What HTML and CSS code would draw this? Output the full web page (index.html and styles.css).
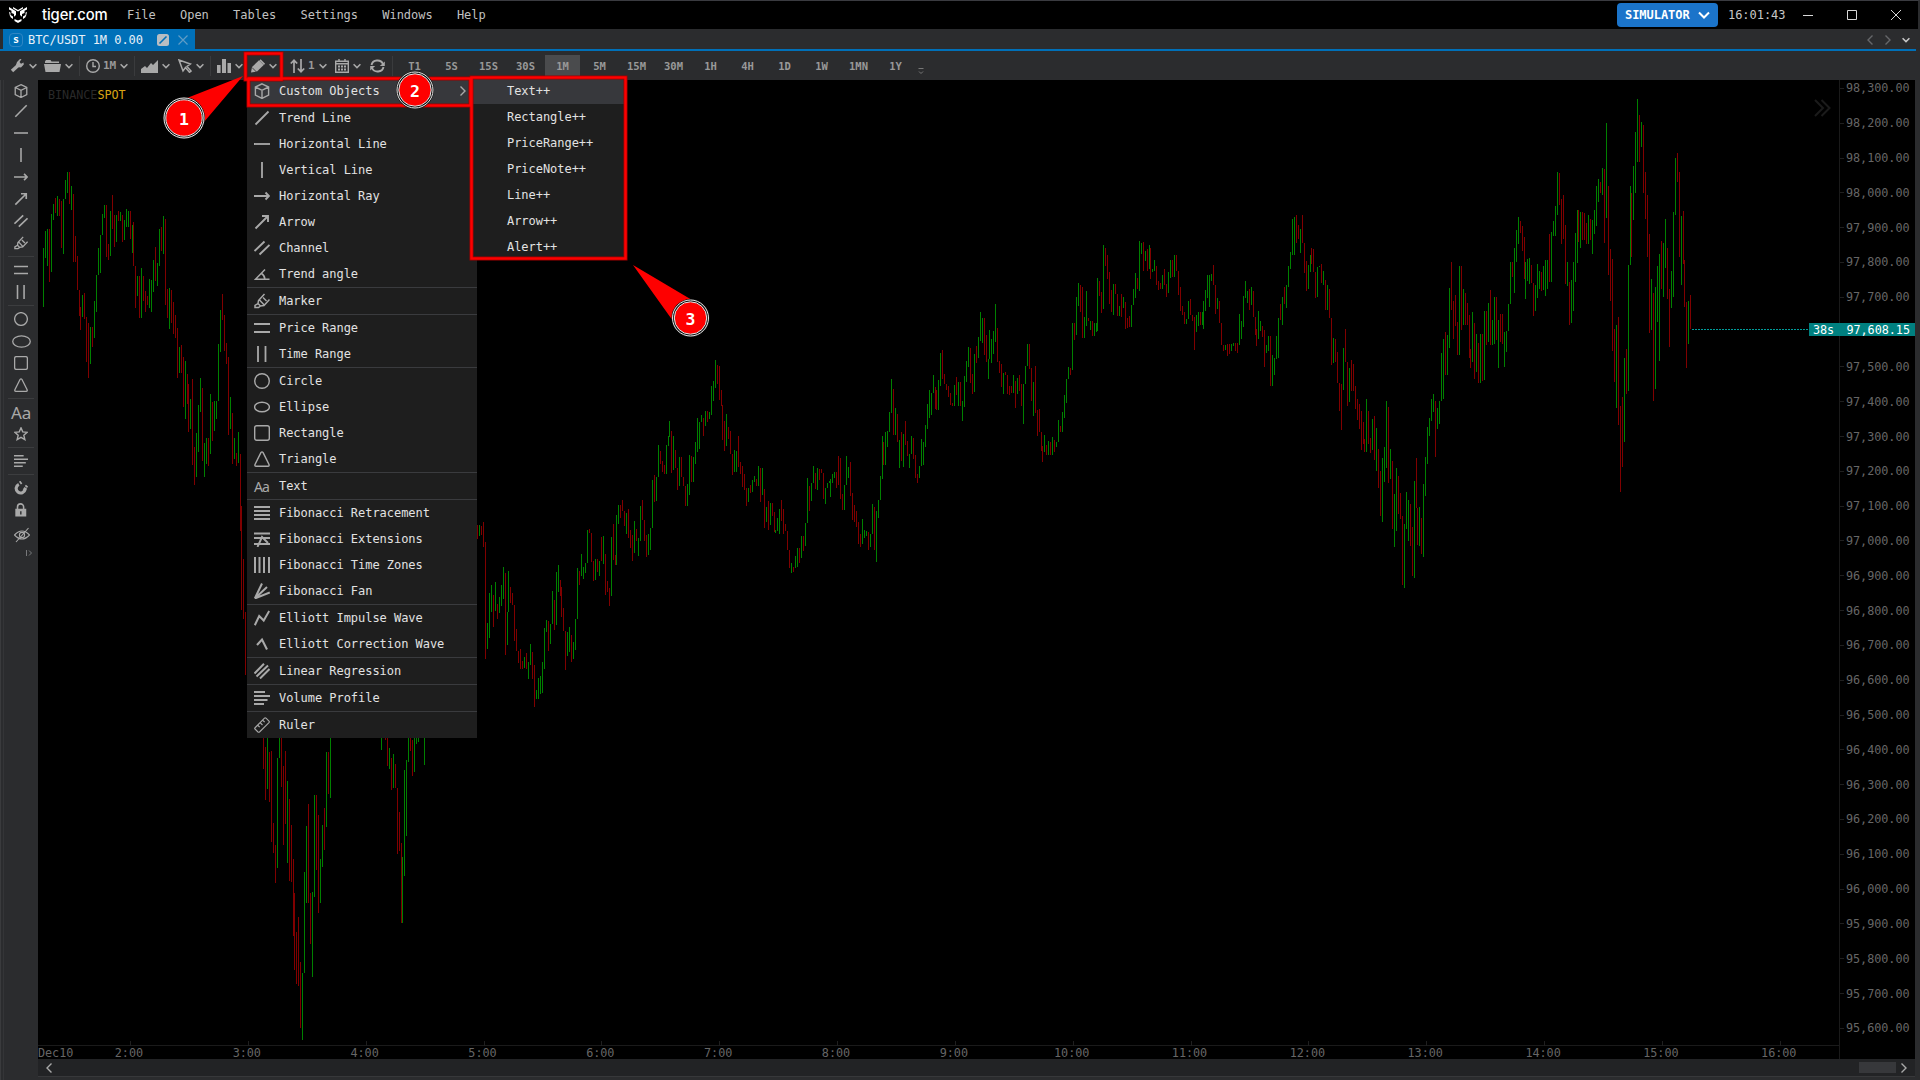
FILE: index.html
```html
<!DOCTYPE html>
<html lang="en">
<head>
<meta charset="utf-8">
<title>tiger.com</title>
<link rel="stylesheet" href="styles.css">
</head>
<body>
<svg class="defs" aria-hidden="true">
  <symbol id="cube" viewBox="0 0 16 16"><path d="M8 .8 14.6 4v8L8 15.4 1.4 12V4zM1.4 4 8 7.3 14.6 4M8 7.3v8"/></symbol>
  <symbol id="line" viewBox="0 0 16 16"><path d="M1.5 14.5 14.5 1.5" stroke-width="1.8"/></symbol>
  <symbol id="hline" viewBox="0 0 16 16"><path d="M0 8h16" stroke-width="1.8"/></symbol>
  <symbol id="vline" viewBox="0 0 16 16"><path d="M8 0v16" stroke-width="1.8"/></symbol>
  <symbol id="ray" viewBox="0 0 16 16"><path d="M0 8h15M11.5 4.5 15 8l-3.500 3.500" stroke-width="1.900"/></symbol>
  <symbol id="arrow" viewBox="0 0 16 16"><path d="M1.500 14.500 14 2M8 2h6v6" stroke-width="1.900"/></symbol>
  <symbol id="channel" viewBox="0 0 16 16"><path d="M.5 11 10.500 1.500M5.500 14.500 15.500 5" stroke-width="1.900"/></symbol>
  <symbol id="angle" viewBox="0 0 16 16"><path d="M11 3.500 1.500 13.300H15.500M7.500 7.500Q10.800 9.500 10.800 13" stroke-width="1.500"/></symbol>
  <symbol id="marker" viewBox="0 0 16 16"><path d="M10.500 1 4.500 7.500l-.5 3 2.500 2.500 3.500-.5 5.500-6M5.500 7 10 11.800M4 10.500 1 12.500v2h3.500l2-1.500" stroke-width="1.500"/><path d="M9 4.500 12.500 8"/></symbol>
  <symbol id="prange" viewBox="0 0 16 16"><path d="M0 4h16M0 12h16" stroke-width="1.800"/></symbol>
  <symbol id="trange" viewBox="0 0 16 16"><path d="M4 0v16M11.500 0v16" stroke-width="1.800"/></symbol>
  <symbol id="circle" viewBox="0 0 16 16"><circle cx="8" cy="8" r="7.300"/></symbol>
  <symbol id="ellipse" viewBox="0 0 16 16"><ellipse cx="8" cy="8" rx="7.400" ry="4.800"/></symbol>
  <symbol id="rect" viewBox="0 0 16 16"><rect x=".7" y=".7" width="14.600" height="14.600" rx="2"/></symbol>
  <symbol id="tri" viewBox="0 0 16 16"><path d="M7 1.500Q8 .3 9 1.500L15 13.500Q15.500 15.200 14 15.200H2Q.5 15.200 1 13.500z"/></symbol>
  <symbol id="fibr" viewBox="0 0 16 16"><path d="M0 2h16M0 6h16M0 10h16M0 14h16" stroke-width="2"/></symbol>
  <symbol id="fibe" viewBox="0 0 16 16"><path d="M0 2.500h16M0 7h16M0 13h16M3.500 16 8 6l6 6" stroke-width="1.900"/></symbol>
  <symbol id="fibt" viewBox="0 0 16 16"><path d="M1 0v16M5.500 0v16M10 0v16M15 0v16" stroke-width="2"/></symbol>
  <symbol id="fan" viewBox="0 0 16 16"><path d="M.8 15.500 8 .5M.8 15.500 13 4M.8 15.500 15.800 9.500" stroke-width="2"/></symbol>
  <symbol id="imp" viewBox="0 0 16 16"><path d="M.8 15.200 5.200 6l4.500 4.500L15.200 1" stroke-width="2"/></symbol>
  <symbol id="corr" viewBox="0 0 16 16"><path d="M3 9 8 3.500l5 10" stroke-width="2.100"/></symbol>
  <symbol id="lreg" viewBox="0 0 16 16"><path d="M.5 10.500 10 .8M2.500 13.500 14 2.500M6 15.500 15.500 6" stroke-width="2"/></symbol>
  <symbol id="vol" viewBox="0 0 16 16"><path d="M0 2h11M0 6h16M0 10h13.500M0 14h10" stroke-width="1.900"/></symbol>
  <symbol id="ruler" viewBox="0 0 16 16"><path d="M.8 11 10.500 1.200Q11.200.5 12 1.200L15 4.200Q15.600 5 15 5.600L5.500 15Q4.700 15.600 4 15L1 12Q.4 11.500.8 11zM4 8.500l1.700 1.700M6.500 6l2 2M9 3.500 10.700 5.200" stroke-width="1.100"/></symbol>
  <symbol id="star" viewBox="0 0 16 16"><path d="m8 1 2 4.600 5 .5-3.800 3.300 1.200 5L8 11.800l-4.400 2.600 1.200-5L1 6.100l5-.5z" stroke-width="1.600"/></symbol>
  <symbol id="magnet" viewBox="0 0 16 16"><path d="M5.500 3.800A5.200 5.200 0 1 0 12.800 9.500L11 8.300" stroke-width="3.600"/><path d="m6.500.3 2.200 3.200M13 5l2.500 2.200" stroke-width="2"/></symbol>
  <symbol id="lock" viewBox="0 0 16 16"><path d="M4 7V4.500a3.500 3.500 0 0 1 7 0V7" stroke-width="1.800"/><path class="solid" fill-rule="evenodd" d="M1.500 6.500h12.500v9h-12.500zM7 9.500v3.500h1.600v-3.500z"/></symbol>
  <symbol id="eye" viewBox="0 0 16 16"><path d="M.5 8Q8 0 15.500 8 8 16 .5 8zM2 15 14.500 1" stroke-width="1.100"/><circle cx="8" cy="8" r="2.600" stroke-width="1.100"/></symbol>
  <symbol id="chev" viewBox="0 0 8 8"><path d="m.6 2.200 3.400 3.400 3.400-3.400" stroke-width="1.500"/></symbol>
  <symbol id="right" viewBox="0 0 8 12"><path d="m1.500 1.500 4.500 4.500-4.500 4.500" stroke-width="1.400"/></symbol>
  <symbol id="left" viewBox="0 0 8 12"><path d="M6.500 1.500 2 6l4.500 4.500" stroke-width="1.400"/></symbol>
</svg>

<header class="titlebar">
  <svg class="logo" viewBox="0 0 18 16"><path d="M0 0 7 4.200V8L5 9.800V7L2.500 6V3.800L0 2.500zM18 0 11 4.200V8l2 1.800V7l2.500-1V3.800L18 2.500zM0 4.800l1.500.9V8L4 9.500V12L1.800 10.500.8 8.500zM18 4.800l-1.500.9V8L14 9.500V12l2.200-1.500 1-2zM4 0l5 3 5-3v1.500L9 4.400 4 1.500zM5.500 12l3.500 1.500 3.500-1.500v2L9 16l-3.500-2z"/></svg>
  <span class="brand">tiger.com</span>
  <nav class="mainmenu"><span>File</span><span>Open</span><span>Tables</span><span>Settings</span><span>Windows</span><span>Help</span></nav>
  <div class="mode">SIMULATOR <svg class="mode-chev" viewBox="0 0 12 8"><path d="m1 1.500 5 5 5-5"/></svg></div>
  <span class="clock">16:01:43</span>
  <svg class="winbtn" viewBox="0 0 10 10"><path d="M0 5.500h10"/></svg>
  <svg class="winbtn" viewBox="0 0 10 10"><path d="M.5.5h9v9h-9z"/></svg>
  <svg class="winbtn" viewBox="0 0 10 10"><path d="m0 0 10 10M10 0 0 10"/></svg>
</header>

<div class="tabs">
  <div class="tab"><span class="badge">s</span><span class="tabname">BTC/USDT 1M 0.00</span>
    <svg class="link" viewBox="0 0 12 12"><rect width="12" height="12" rx="2.500"/><path d="m2.500 9.500 7-7"/></svg>
    <svg class="close" viewBox="0 0 10 10"><path d="m.5.5 9 9M9.500.5l-9 9"/></svg></div>
  <div class="tabnav"><svg class="i arrow-s"><use href="#left"/></svg><svg class="i arrow-s"><use href="#right"/></svg><svg class="i chev lit"><use href="#chev"/></svg></div>
</div>

<div class="toolbar">
  <div class="tools">
    <svg class="t" viewBox="0 0 14 14"><path d="M2 12 8 6.500" stroke-width="3.500"/><path class="solid" d="M7 3 10 0l1.500.3L9.500 3 11 4.800l2.500-1.300.3 2L11 8.500l-4-.5-1-2z"/></svg>
    <svg class="i chev"><use href="#chev"/></svg>
    <svg class="t w17" viewBox="0 0 17 14"><path class="solid" d="M1 2.500 2 1h4.500l1 1.500H15V4H1zM0 5h17l-1.500 8h-14z"/></svg>
    <svg class="i chev"><use href="#chev"/></svg>
    <i class="vsep"></i>
    <svg class="t" viewBox="0 0 14 14"><circle cx="7" cy="7" r="6.300"/><path d="M7 3v4.500h3"/></svg>
    <span class="period">1M</span>
    <svg class="i chev"><use href="#chev"/></svg>
    <i class="vsep"></i>
    <svg class="t w17" viewBox="0 0 17 14"><path class="solid" d="M0 14v-4l4-3 2 2 4-5 2 2 5-5v13z"/></svg>
    <svg class="i chev"><use href="#chev"/></svg>
    <svg class="t" viewBox="0 0 14 14"><path d="M1 1 12.500 5 9 7.500l4 4.500-1.500 1.300-4-4.800L5 12z" stroke-width="1.500"/></svg>
    <svg class="i chev"><use href="#chev"/></svg>
    <i class="vsep"></i>
    <svg class="t" viewBox="0 0 14 14"><path class="solid" d="M0 6h3.600v8H0zM5 0h4v14H5zM10.500 4h3.500v10h-3.500z"/></svg>
    <svg class="i chev"><use href="#chev"/></svg>
    <svg class="t w15" viewBox="0 0 15 14"><path class="solid" d="M0 13.500 1 8 8 1.300 12.700 6 6 12.500z"/><path d="m9 .8 4.500 4.500" stroke-width="1.800"/><path class="cut" d="m1 8.500 4.500 4.500"/></svg>
    <svg class="i chev"><use href="#chev"/></svg>
    <svg class="t w15" viewBox="0 0 15 14"><path d="M4 14V1.500M.8 4.500 4 1.300l3.200 3.200M11 0v12.500M7.800 9.500l3.200 3.200 3.200-3.200" stroke-width="1.700"/></svg>
    <span class="period">1</span>
    <svg class="i chev"><use href="#chev"/></svg>
    <svg class="t" viewBox="0 0 14 14"><path d="M.7 2.200h12.600v11H.7zM4 0v3M10 0v3M.7 4.800h12.600"/><path d="M3 7.500h8.500M3 10.500h8.500" stroke-width="2" stroke-dasharray="2 1"/></svg>
    <svg class="i chev"><use href="#chev"/></svg>
    <svg class="t w15" viewBox="0 0 15 14"><path d="M1.500 6A6 5.500 0 0 1 13 5M13.500 8A6 5.500 0 0 1 2 9" stroke-width="1.900"/><path class="solid" d="M14.800 2.500V7h-5zM.2 11.500V7h5z"/></svg>
    <i class="vsep"></i>
  </div>
  <div class="frames"><span>T1</span><span>5S</span><span>15S</span><span>30S</span><span class="on">1M</span><span>5M</span><span>15M</span><span>30M</span><span>1H</span><span>4H</span><span>1D</span><span>1W</span><span>1MN</span><span>1Y</span></div>
  <svg class="more" viewBox="0 0 6 7"><path d="M.5.500h5M1 3.500l2 2 2-2"/></svg>
</div>

<main class="work">
  <aside class="sidebar">
    <svg class="i first"><use href="#cube"/></svg>
    <svg class="i"><use href="#line"/></svg><svg class="i"><use href="#hline"/></svg><svg class="i"><use href="#vline"/></svg><svg class="i"><use href="#ray"/></svg><svg class="i"><use href="#arrow"/></svg><svg class="i"><use href="#channel"/></svg><svg class="i"><use href="#marker"/></svg>
    <hr>
    <svg class="i"><use href="#prange"/></svg><svg class="i"><use href="#trange"/></svg>
    <hr>
    <svg class="i"><use href="#circle"/></svg><svg class="i wide"><use href="#ellipse"/></svg><svg class="i"><use href="#rect"/></svg><svg class="i"><use href="#tri"/></svg>
    <hr>
    <span class="aa">Aa</span><svg class="i"><use href="#star"/></svg>
    <hr>
    <svg class="i"><use href="#vol"/></svg>
    <hr>
    <svg class="i"><use href="#magnet"/></svg><svg class="i"><use href="#lock"/></svg><svg class="i eye"><use href="#eye"/></svg>
    <svg class="expand" viewBox="0 0 7 6"><path d="M.5 0v6M3 .5 5.500 3 3 5.500"/></svg>
  </aside>

  <section class="chart">
    <svg class="plot" id="plot" viewBox="38 80 1801 965">
      <path class="lastline" d="M1692 329.500H1809"/>
      <path class="jump" d="m1815 100 8 8-8 8M1821.500 100l8 8-8 8"/>
    </svg>
    <div class="source">BINANCE<b>SPOT</b></div>
    <div class="prices" id="prices"></div>
    <div class="times" id="times"><span class="day">Dec10</span></div>
    <div class="last"><span>38s</span><span>97,608.15</span></div>
    <div class="scroll"><svg class="i arrow-s"><use href="#left"/></svg><i class="thumb"></i><svg class="i arrow-s"><use href="#right"/></svg></div>
  </section>
</main>

<div class="menu">
  <div class="item hot"><svg class="i"><use href="#cube"/></svg>Custom Objects<svg class="i sub"><use href="#right"/></svg></div><hr>
  <div class="item"><svg class="i"><use href="#line"/></svg>Trend Line</div>
  <div class="item"><svg class="i"><use href="#hline"/></svg>Horizontal Line</div>
  <div class="item"><svg class="i"><use href="#vline"/></svg>Vertical Line</div>
  <div class="item"><svg class="i"><use href="#ray"/></svg>Horizontal Ray</div>
  <div class="item"><svg class="i"><use href="#arrow"/></svg>Arrow</div>
  <div class="item"><svg class="i"><use href="#channel"/></svg>Channel</div>
  <div class="item"><svg class="i"><use href="#angle"/></svg>Trend angle</div><hr>
  <div class="item"><svg class="i"><use href="#marker"/></svg>Marker</div><hr>
  <div class="item"><svg class="i"><use href="#prange"/></svg>Price Range</div>
  <div class="item"><svg class="i"><use href="#trange"/></svg>Time Range</div><hr>
  <div class="item"><svg class="i"><use href="#circle"/></svg>Circle</div>
  <div class="item"><svg class="i"><use href="#ellipse"/></svg>Ellipse</div>
  <div class="item"><svg class="i"><use href="#rect"/></svg>Rectangle</div>
  <div class="item"><svg class="i"><use href="#tri"/></svg>Triangle</div><hr>
  <div class="item"><span class="aa small">Aa</span>Text</div><hr>
  <div class="item"><svg class="i"><use href="#fibr"/></svg>Fibonacci Retracement</div>
  <div class="item"><svg class="i"><use href="#fibe"/></svg>Fibonacci Extensions</div>
  <div class="item"><svg class="i"><use href="#fibt"/></svg>Fibonacci Time Zones</div>
  <div class="item"><svg class="i"><use href="#fan"/></svg>Fibonacci Fan</div><hr>
  <div class="item"><svg class="i"><use href="#imp"/></svg>Elliott Impulse Wave</div>
  <div class="item"><svg class="i"><use href="#corr"/></svg>Elliott Correction Wave</div><hr>
  <div class="item"><svg class="i"><use href="#lreg"/></svg>Linear Regression</div><hr>
  <div class="item"><svg class="i"><use href="#vol"/></svg>Volume Profile</div><hr>
  <div class="item"><svg class="i"><use href="#ruler"/></svg>Ruler</div>
</div>
<div class="submenu">
  <div class="item hot">Text++</div><div class="item">Rectangle++</div><div class="item">PriceRange++</div><div class="item">PriceNote++</div><div class="item">Line++</div><div class="item">Arrow++</div><div class="item">Alert++</div>
</div>

<svg class="notes" viewBox="0 0 1920 1080">
  <g class="frame-edge"><rect x="245.500" y="53.500" width="36" height="26"/><rect x="248.500" y="78.500" width="222" height="27"/><rect x="471.500" y="77.500" width="154" height="181"/></g>
  <g class="frame-core"><rect x="245.500" y="53.500" width="36" height="26"/><rect x="248.500" y="78.500" width="222" height="27"/><rect x="471.500" y="77.500" width="154" height="181"/></g>
  <path class="tail" d="M243 76 187 98 204 122zM633 265l59 35-19 21z"/>
  <g class="ball"><circle cx="184" cy="118" r="19.500"/><circle cx="415" cy="90" r="17.500"/><circle cx="690.500" cy="318" r="17.500"/></g>
  <g class="ring"><circle cx="184" cy="118" r="18.200"/><circle cx="184" cy="118" r="20"/><circle cx="415" cy="90" r="16.200"/><circle cx="415" cy="90" r="18"/><circle cx="690.500" cy="318" r="16.200"/><circle cx="690.500" cy="318" r="18"/></g>
  <text x="184" y="124.500">1</text><text x="415" y="96.500">2</text><text x="690.500" y="324.500">3</text>
</svg>
<script src="chart.js"></script>
</body>
</html>
```
FILE: styles.css
```css
* { box-sizing: border-box; }
body { margin: 0; width: 1920px; height: 1080px; overflow: hidden; display: flex; flex-direction: column; background: #2b2c2e; color: #b9b9b9; font: 12px "DejaVu Sans Mono", "Liberation Mono", monospace; letter-spacing: -0.04px; }
.defs { position: absolute; width: 0; height: 0; }
svg { flex: none; fill: none; stroke: #a9a9a9; stroke-width: 1.4; }
.solid { fill: #a9a9a9; stroke: none; }
.i { width: 16px; height: 16px; }
.i.chev { width: 8px; height: 8px; }
.i.arrow-s { width: 8px; height: 12px; }

.titlebar { height: 29px; background: #000; border-top: 1px solid #3a3b40; border-right: 2px solid #2b2c2e; display: flex; align-items: center; padding-left: 9px; padding-right: 17px; flex: none; }
.logo { width: 18px; height: 16px; fill: #fff; stroke: none; }
.brand { margin-left: 15px; width: 85px; color: #fff; font: 500 14.8px "Inter", sans-serif; letter-spacing: -0.1px; padding-bottom: 1px; }
.mainmenu { display: flex; gap: 24.3px; color: #c0c0c0; }
.mode { margin-left: auto; width: 101px; height: 24px; background: #1b74ca; border-radius: 4px; color: #fff; font-weight: bold; display: flex; align-items: center; justify-content: space-between; padding: 0 8px; }
.mode-chev { width: 12px; height: 8px; stroke: #fff; stroke-width: 2; }
.clock { margin-left: 10px; width: 75px; color: #c8c8c8; }
.winbtn { width: 10px; height: 10px; stroke: #d8d8d8; stroke-width: 1; margin-right: 34px; }
.winbtn:last-child { margin-right: 0; }

.tabs { height: 22px; flex: none; border-bottom: 2px solid #0070b8; display: flex; justify-content: space-between; padding-left: 3px; margin-right: 4px; }
.tab { width: 192px; background: #0070b8; color: #fff; display: flex; align-items: center; padding-left: 6px; padding-top: 1px; }
.badge { width: 14px; height: 14px; border: 1px solid #2f86c4; border-radius: 4px; font: bold 10px/11px "DejaVu Sans Mono", monospace; text-align: center; }
.tabname { margin-left: 5px; width: 129px; color: #e8f1f8; white-space: nowrap; }
.link { width: 12px; height: 12px; fill: #b8bdc2; stroke: none; }
.link path { stroke: #0070b8; stroke-width: 1.6; }
.close { width: 10px; height: 10px; margin-left: 9px; stroke: #5f9cc6; stroke-width: 1.2; }
.tabnav { display: flex; align-items: center; gap: 10px; padding-right: 6px; padding-top: 2px; }
.tabnav svg { stroke: #66676a; }
.tabnav .lit { stroke: #c8c8c8; }

.toolbar { height: 29px; flex: none; display: flex; align-items: center; }
.tools { display: grid; width: 397px; height: 28px; padding-left: 10px; align-items: center; grid-template-columns: 19px 15px 21px 14px 7px 17px 17px 14px 7px 21px 16px 18px 14px 7px 18px 16px 18px 21px 18px 11px 16px 18px 17px 22px 4px; }
.t { width: 14px; height: 14px; }
.t.w17 { width: 17px; }
.t.w15 { width: 15px; }
.cut { stroke: #2b2c2e; stroke-width: .8; }
.vsep { width: 1px; height: 20px; background: #3a3b3d; }
.period { font-weight: bold; font-size: 11px; color: #999; }
.frames { display: flex; gap: 2px; height: 100%; padding-top: 4px; }
.frames span { width: 35px; text-align: center; font: bold 10.5px/22px "DejaVu Sans Mono", monospace; color: #999; }
.frames .on { background: #4a4b4d; }
.more { width: 6px; height: 7px; margin: 12px 0 0 5px; stroke: #777; stroke-width: 1; }

.work { flex: none; height: 1000px; display: flex; }
.sidebar { width: 38px; display: flex; flex-direction: column; align-items: center; padding-left: 4px; box-shadow: inset 1px 0 #3a3b3d, inset 3px 0 #2b2c2e, inset 4px 0 #343537; }
.sidebar .i { width: 14px; height: 14px; margin: 4px 0; stroke-width: 1.5; }
.sidebar .first { height: 14px; margin: 4px 0 2px; }
.sidebar .wide { width: 19px; height: 19px; margin: 1.5px 0; stroke-width: 1.1; }
.sidebar .eye { width: 16px; height: 16px; margin: 6px -2px 3px 0; }
.sidebar hr { width: 26px; height: 1px; border: 0; margin: 2px 0; background: #3c3d3f; }
.aa { height: 22px; font: 17px/24px "Noto Sans", sans-serif; letter-spacing: -.3px; color: #a9a9a9; }
.aa.small { width: 16px; font-size: 14px; letter-spacing: -1px; }
.expand { width: 7px; height: 6px; margin: 4px 0 0 16px; stroke: #77787a; stroke-width: 1; }

.chart { position: relative; width: 1877px; height: 997px; display: grid; grid-template: 965px 14px 17px 1px / 1801px 76px; background: #000; font-size: 11.8px; }
.plot { width: 1801px; height: 965px; stroke: none; }
.up { fill: #008000; }
.down { fill: #800000; }
.lastline { stroke: #009c9a; stroke-width: 1; stroke-dasharray: 2 1; }
.jump { stroke: #1b1b1b; stroke-width: 2; }
.source { position: absolute; left: 10px; top: 8px; color: #292929; letter-spacing: -0.05px; }
.source b { color: #d9a514; font-weight: normal; }
.prices { grid-row: 1 / 3; grid-column: 2; border-left: 1px solid #1a1a1a; overflow: hidden; color: #666; }
.prices::before { content: ""; display: block; margin-top: -9px; }
.price { height: 34.815px; display: flex; align-items: center; gap: 2px; }
.price::before { content: ""; width: 4px; height: 1px; background: #1f1f1f; }
.times { grid-row: 2; grid-column: 1; display: flex; border-top: 1px solid #1a1a1a; color: #666; line-height: 14px; }
.times .day { width: 32px; white-space: nowrap; }
.time { width: 117.85px; flex: none; text-align: center; position: relative; }
.time::before { content: ""; position: absolute; left: 60px; top: -5px; width: 1px; height: 5px; background: #1f1f1f; }
.last { position: absolute; right: 0; top: 243px; width: 106px; height: 13px; background: #008080; color: #fff; display: flex; justify-content: space-between; padding: 0 5px 0 4px; line-height: 14px; }
.scroll { grid-row: 3; grid-column: 1 / 3; background: #222325; display: flex; align-items: center; padding: 0 7px; gap: 4px; }
.thumb { margin-left: auto; width: 37px; height: 11px; background: #37383b; }
.chart::after { content: ""; grid-row: 4; grid-column: 1 / 3; background: #37383a; }

.menu, .submenu { position: absolute; background: #1e1e1e; color: #e2e2e2; }
.menu { left: 247px; top: 78px; width: 230px; height: 660px; }
.menu hr { height: 1px; margin: 0; border: 0; background: #3a3b3e; }
.item { height: 26px; display: flex; align-items: center; gap: 9px; padding-left: 7px; white-space: pre; }
.item .sub { width: 8px; height: 12px; margin-left: auto; margin-right: 10px; }
.hot { background: #37383c; }
.submenu { left: 473px; top: 78px; width: 152px; height: 182px; }
.submenu .item { padding-left: 34px; }

.notes { position: absolute; left: 0; top: 0; width: 1920px; height: 1080px; stroke: none; }
.frame-edge { stroke: #a00000; stroke-width: 4; }
.frame-core { stroke: #fe0000; stroke-width: 2.4; }
.tail { fill: #fe0000; }
.ball { fill: #fe0000; stroke: #111; stroke-width: 3; }
.ring { stroke: #e8e8e8; stroke-width: 1; }
.notes text { fill: #fff; font: bold 16.5px "DejaVu Sans Mono", monospace; text-anchor: middle; letter-spacing: 0; }
```
FILE: chart.js
```js
// Each run: [first bar x, y origin, y units per pixel, bars]; a bar is direction, high, low.
const FIRST = 43.68, STEP = 1.9633;
const runs = [
[43,80,3,"g504 681 g453 534 g447 558 r447 606 g402 576 g372 420 r354 399 g348 408 r357 408 r363 504 g357 522 g300 357 g276 339 r276 372 g318 390 r342 546 r468 546 r528 630 r630 708 r681 750 g645 711 r639 717 r711 846 r729 894 g741 852 r741 801 g663 774 g585 696 g504 585 g465 579 g402 465 g375 414 r375 531 r492 540 g393 528 r345 447 r405 501 g405 486 r393 423 g396 423 r405 486 g420 480 g387 441 g393 441 r393 477 g435 519"],
[133,80,3,"r426 558 r558 684 g588 648 r588 714 g564 714 r588 663 r633 696 r648 675 g597 684 g600 696 g540 636 r501 603 g549 618 g447 558 r441 513 g408 522 r417 675 r627 714 g624 747 r630 729 r666 762 r705 774 r744 894 g801 879 r795 879 r831 981 g843 1017 r882 972 r912 1056 g957 1047 r897 1155 r1101 1215 g1059 1191 g975 1116 g894 996 r924 1143 g1089 1191 g1074 1152 r1074 1158 g942 1122 r966 1083 g963 1053 g963 1017 g792 963 g690 816 r642 720 r705 813 r789 852 r831 1065 g951 1047 r999 1152 g1074 1137 r1120 1158 g1056 1149 r1122 1353 r1278 1590 r1437 1617 r1596 1785"],
[263,540,2.904,"r540 665 r600 755 g540 722 r617 760 r613 877 r822 909 r886 996 g632 952 g540 633 r540 717 r656 886 r613 825 g700 938 r752 990 r829 993 r926 1150 r1025 1248 r1137 1288 r1095 1295 r1225 1417 g1257 1451 g964 1257 g830 1054 r767 1054 r1025 1173 g1021 1269 g740 1036 r740 958 r799 1083 g926 1054 g828 950 r778 900 g616 833 r616 738 g540 748"],
[381,540,2.904,"g540 610"],
[385,540,2.904,"r540 580 r540 656 g603 665 r632 726 g621 719 r650 720 r720 912 r790 903 r880 1112 g920 1112 g668 976 g639 859 g540 645 r540 613 r580 685 g540 674 g540 592 g540 587"],
[424,540,2.904,"g540 653"],
[477,400,3,"r375 417 g375 408"],
[481,340,3,"r558 585 r546 621 r606 957 g849 927 g759 894 g735 816 r765 861 g726 813 r792 837 g771 819 g735 798 g681 777 r699 945 g816 915 g693 816 r741 789 r759 795 r795 903 r867 933"],
[518,340,3,"r933 969 r927 987 r963 987 g951 984 r939 987 g966 1017 g912 975 r936 1017 r975 1101 g1050 1077 g1014 1077 g1008 1062 g966 1059 g864 987 g840 876 r843 933 g852 912 g753 852 r780 870 g696 855 g675 756 r720 768 r741 831 r804 873 r873 990 g876 948 g861 936 r885 966"],
[573,340,3,"g906 957 g837 930 g684 837 r693 735 g642 708 g681 717 g669 699 g570 669 r567 579 r579 666 r663 723 g657 720 r657 696 g663 708 r591 663 g588 672 r642 765 r723 756 r744 798 g591 768 r552 660 r645 675 g525 675 g495 552 r495 534 r480 513 r513 558 g519 582"],
[628,340,3,"r507 594 r570 624 r585 663 g543 639 r567 603 g594 648 g498 603 r480 540 r540 603 r585 651 g582 645 g564 630 g420 564 r405 486 g411 483 g315 411 r333 372 r363 396 r375 402 g315 402 g288 318 g243 291 r273 399 g288 390 r330 384 r384 450 g351 438 r351 411"],
[683,340,3,"r411 438 r438 498 g432 498 g345 465 r348 426 g351 426 g306 372 g234 336 g246 327 g225 246 r234 288 g213 258 r213 246 g216 237 g138 225 g123 183 g60 144 r75 132 r78 180 r150 198 r195 300 r243 333 g222 318 r261 297 r273 342 r342 405 g330 396 g333 396"],
[738,340,3,"r288 381 r366 402 r378 441 r402 450 r444 498 g444 486 r435 459 g420 456 g408 426 r417 438 g378 438 r384 486 g384 465 r447 564 g501 546 r483 570 g489 555 r489 528 r516 576 g570 579 g534 573 g507 582 r480 543 r507 582 r552 573 r573 630 r630 684 g669 699"],
[793,340,3,"r681 696 g648 684 g624 681 r624 669 g588 654 r588 633 g549 618 g414 549 r438 513 g429 483 g378 429 r399 447 g384 450 r387 420 r387 399 r399 477 g444 492 g429 444 g423 429 g417 471 g402 429 g396 414 r396 444 r348 435 r354 477 r462 510 g435 510"],
[846,340,3,"g348 435 g381 414 r366 468 r459 540 r495 546 r513 561 r546 612 r582 621 g537 612 g570 594 g573 588 r576 630 g582 621 g492 582 r501 630 g513 666 g480 534 g408 480 g288 417 r306 375 g276 375 g273 321 g216 276 g117 219 r147 285 g204 285 r222 306 g300 384"],
[901,340,3,"r276 363 g282 381 r243 315 r303 348 g342 384 g288 342 r294 357 r345 414 r402 429 g378 414 g297 378 g306 375 g255 321 g192 267 g150 234 g159 225 g105 159 r141 207 r150 210 g120 210 g39 138 r30 117 r102 132 r132 150 r138 171 r159 195 r189 198 g135 198"],
[956,340,3,"r111 165 g126 198"],
[960,220,3,"r486 558 g543 603 g468 561 g423 486 g381 441 r384 489 r462 522 g402 516 r378 429 g351 414 g276 363 g294 369 r294 405 r345 426 g417 477 g330 417 g357 429 g333 402 g252 366 r324 426 r423 459 r432 501 g459 522 r456 465 r465 522 r498 525"],
[1011,220,3,"r498 519 g465 519 r483 564 g474 522 r465 513 r492 558 g492 612 g438 492 g372 438 r372 447 r444 543 g486 588 r438 579 r570 648 r567 636 r636 693 r678 726 g645 696 r675 705 g663 705 r666 705 g651 705 r660 696 g666 681 g600 666 r618 636 g576 636 g525 594"],
[1066,220,3,"g477 549 g441 477 r444 465 g309 450 r309 360 g231 345 g189 258 r195 276 r201 354 g291 354 g213 318 r294 303 g303 330 r303 348 g309 348 g309 336 g174 333 r183 228 r216 279 g75 267 r84 138 r105 177 r156 252 r210 276 g192 285 r192 222 r222 288 g258 288"],
[1121,220,3,"r222 291 g231 264 r246 327 r294 324 r288 321 g255 321 g207 255 g159 234 r174 207 g63 213 g69 102 r66 153 g93 123 r87 153 g75 147 r84 177 g147 156 g120 153 r138 195 r183 210 r189 207 g165 207 r147 195 r192 231 g156 219 g120 174 r120 171 g105 171"],
[1176,220,3,"r105 153 r153 225 r201 273 r258 285 r276 312 g297 312 g243 297 r237 285 r285 303 r291 390 g285 336 g276 318 r276 315 g276 315 g243 327 g210 273 g165 234 g165 261 g162 183 r135 195 r195 282 g234 267 r243 309 r309 375 r375 393 g375 390 r372 408 r372 402"],
[1231,220,3,"g372 393 g369 378 r369 393 r369 399 g282 375 g303 357 g228 321 g183 234 g213 249 r207 270 g201 255 r213 291 r291 345 r327 378 g273 357 g303 333 r318 351 r330 441 g375 399 g348 393 r348 498 g405 498 g414 465 g348 417 g294 414 r252 300 g231 315 r201 252"],
[1286,220,3,"g195 264 g138 201 g96 147 g-3 105 g-9 105 r-15 69 r15 57 g27 99 r-15 69 r69 159 r123 213 g135 207 g105 156 r84 132 r87 156 r156 234 g141 231 g138 141 r132 189 g153 195 r180 270 g195 270 r207 294 r294 435 g354 429 r357 426 r396 489 r489 573"],
[1341,220,3,"r492 630 g384 510 r327 426 r426 558 g444 546 r420 513 r432 513 r498 567 r537 600 r552 627 r573 690 r606 672 r657 696 g537 696 r573 672 r654 699 g597 690 r588 720 g624 753 r687 804"],
[1381,80,3,"r1174 1308 g1133 1326 g1101 1206 g963 1164 r981 1209 g1107 1197 r1143 1347 g1242 1401"],
[1396,80,3,"g1164 1353 r1188 1302 r1239 1317 r1308 1515 g1332 1524 g1236 1347 g1260 1383 r1272 1398 r1341 1488 g1203 1494 r1134 1284 r1284 1395 g1281 1398 r1314 1422 g1212 1431 g1131 1248 g1041 1152 g1014 1068 g957 1023 g942 996 r963 1131 g984 1047 g963 1032 g819 963 g777 957 r756 885 g765 885 g624 804"],
[1451,80,3,"r546 690 r663 777 r645 738 r726 825 g558 825 r558 750 g627 735 r639 735 r669 735 r705 834 r807 864 g696 846 r729 897 g762 876 r789 909 g762 909 r762 903 g693 900 r693 795 g669 786 r630 795 g720 795 g651 792 r651 780 g720 864 r702 786 r702 792"],
[1504,80,3,"g756 861 g753 816 g672 753 g546 672 r546 591 g504 639 g450 546 g411 492 r423 459 r438 513 r471 597 g546 657 g537 603 g534 612 r555 609 r609 708 g615 693 g552 654 g573 627 r576 633 g558 630 g540 648 g540 627 r462 606 g456 606 g423 468 g378 468 g276 405"],
[1559,80,3,"r279 375 r357 492 r345 477 r435 612 g546 618 r606 735 g600 729 g546 693 g459 606 g390 549 r390 486 g396 504 r396 480 r399 480 r429 492 g405 492 r417 480 g420 522 g390 462 g318 438 g297 366 r306 339 g264 345 r267 489 g129 414 r318 585 r507 663 r537 813"],
[1614,80,3,"r747 906 g735 984 r711 1035 r978 1236 r951 1161 g834 1086 r807 942 g555 933 g318 555 r339 531 g258 420 g156 339 g57 246 r105 246 g126 201 r135 339 r276 417 r345 531 r462 759 g597 750 r639 963 g621 927 g558 726 g522 843 r483 627 g489 651 g417 564 r504 657"],
[1669,80,3,"r627 801 g573 684 g396 651 g234 405 r219 306 r276 531 g408 615 r393 552 r540 681 r666 864 g663 792 r645 747"]
];

const paths = { g: "", r: "" };
for (const [x0, y0, unit, bars] of runs) {
  const base = Math.round((x0 + 0.5 - FIRST) / STEP);
  bars.match(/[gr]-?\d+ -?\d+/g).forEach((bar, n) => {
    const [high, low] = bar.slice(1).split(" ").map(v => Math.round(y0 + v / unit));
    paths[bar[0]] += `M${Math.floor(FIRST + (base + n) * STEP)} ${high}h1V${low}h-1z`;
  });
}
const plot = document.getElementById("plot");
for (const [key, cls] of [["g", "up"], ["r", "down"]]) {
  const p = document.createElementNS("http://www.w3.org/2000/svg", "path");
  p.setAttribute("class", cls);
  p.setAttribute("d", paths[key]);
  plot.prepend(p);
}

const add = (parent, cls, text) => {
  const el = document.createElement("div");
  el.className = cls;
  el.textContent = text;
  document.getElementById(parent).append(el);
};
// 97,600 is left out: the last-price tag sits there
for (let p = 98300; p >= 95600; p -= 100) add("prices", "price", p === 97600 ? "" : p.toLocaleString("en-US") + ".00");
for (let h = 2; h <= 16; h++) add("times", "time", h + ":00");
```
